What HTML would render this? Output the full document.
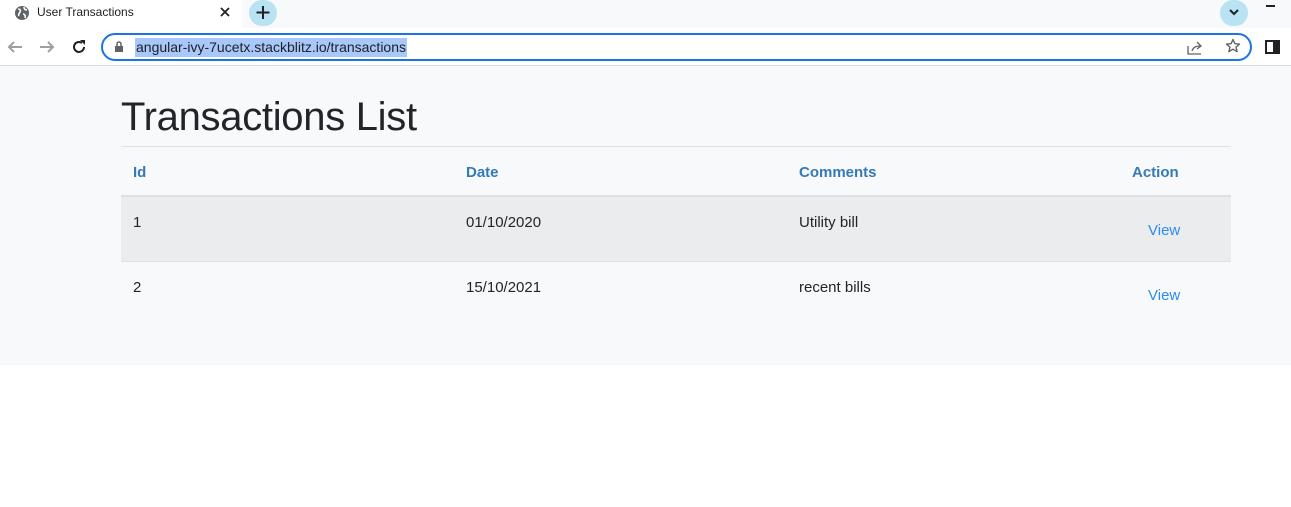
<!DOCTYPE html>
<html><head><style>
*{margin:0;padding:0;box-sizing:border-box}
body{width:1291px;height:507px;background:#fff;font-family:"Liberation Sans",sans-serif;position:relative;overflow:hidden}
.tabs{position:absolute;left:0;top:0;width:1291px;height:28px;background:#f8f9fa}
.tab{position:absolute;left:0;top:0;width:242px;height:28px;background:#fff}
.toolbar{position:absolute;left:0;top:28px;width:1291px;height:38px;background:#fff;border-bottom:1px solid #dadce0}
.omni{position:absolute;left:101px;top:33px;width:1151px;height:28px;border:2px solid #1a73e8;border-radius:14px;background:#fff}
.page{position:absolute;left:0;top:66px;width:1291px;height:299px;background:#f8f9fa}
h1{position:absolute;left:121px;top:95px;font-size:40px;font-weight:500;color:#212529;letter-spacing:-0.3px}
.t{position:absolute;left:121px;width:1110px;font-size:15px;color:#212529}
.th{color:#337ab7;font-weight:bold}
.a{position:absolute}
</style></head><body>
<div class="tabs"><div class="tab">
<svg class="a" style="left:14px;top:5px" width="16" height="16" viewBox="0 0 16 16"><circle cx="8" cy="8" r="7" fill="#5f6368"/><path d="M4 4c2 0 3 1 2 3s-2 2-1 4M10 2c0 2 1 3 3 3M9 9c1 0 3 1 2 4" stroke="#fff" stroke-width="1.6" fill="none"/></svg>
<div class="a" style="left:37px;top:5px;font-size:12px;color:#202124">User Transactions</div>
<svg class="a" style="left:220px;top:7px" width="10" height="10"><path d="M1 1l8 8M9 1l-8 8" stroke="#202124" stroke-width="1.8"/></svg>
</div>
<div class="a" style="left:249px;top:0;width:28px;height:26px;border-radius:14px;background:#b9e3f2"><svg width="28" height="26"><path d="M14 6v13M7.5 12.5h13" stroke="#202124" stroke-width="2"/></svg></div>
<div class="a" style="left:1220px;top:0;width:28px;height:26px;border-radius:14px;background:#b9e3f2"><svg width="28" height="26"><path d="M10 10l4 4 4-4" stroke="#202124" stroke-width="2" fill="none"/></svg></div>
<div class="a" style="left:1266px;top:5px;width:9px;height:2px;background:#202124"></div>
</div>
<div class="toolbar">
<svg class="a" style="left:6px;top:10px" width="18" height="18"><path d="M16 9H3M8 4L3 9l5 5" stroke="#9aa0a6" stroke-width="2" fill="none"/></svg>
<svg class="a" style="left:38px;top:10px" width="18" height="18"><path d="M2 9h13M10 4l5 5-5 5" stroke="#9aa0a6" stroke-width="2" fill="none"/></svg>
<svg class="a" style="left:70px;top:10px" width="18" height="18"><path d="M14 9a5 5 0 1 1-2-4" stroke="#202124" stroke-width="2" fill="none"/><path d="M10 2h5v5z" fill="#202124"/></svg>
<svg class="a" style="left:1265px;top:12px" width="16" height="14"><rect x="1" y="1" width="13" height="12" stroke="#202124" stroke-width="2" fill="none"/><rect x="8" y="1" width="6" height="12" fill="#202124"/></svg>
</div>
<div class="omni">
<svg class="a" style="left:11px;top:6px" width="10" height="12"><rect x="1" y="5" width="8" height="6" fill="#5f6368"/><path d="M3 5V3a2 2 0 0 1 4 0v2" stroke="#5f6368" stroke-width="1.5" fill="none"/></svg>
<div class="a" style="left:32px;top:3px;height:19px;padding:1px 1px;background:#a8c7fa;font-size:14px;color:#202124;line-height:17px">angular-ivy-7ucetx.stackblitz.io/transactions</div>
<svg class="a" style="left:1083px;top:5px" width="18" height="16"><path d="M2 6v8h13M6 11c1-4 4-5 8-5M11 2l4 4-4 3" stroke="#5f6368" stroke-width="1.3" fill="none"/></svg>
<svg class="a" style="left:1122px;top:3px" width="16" height="16" viewBox="0 0 16 16"><path d="M8 1.5l1.9 4.2 4.6.4-3.5 3 1.1 4.5L8 11.2l-4.1 2.4 1.1-4.5-3.5-3 4.6-.4z" stroke="#5f6368" stroke-width="1.4" fill="none" stroke-linejoin="round"/></svg>
</div>
<div class="page"></div>
<h1>Transactions List</h1>
<div class="t" style="top:146px;height:1px;background:#dee2e6"></div>
<div class="t th" style="top:164px"><span class="a" style="left:12px">Id</span><span class="a" style="left:345px">Date</span><span class="a" style="left:678px">Comments</span><span class="a" style="left:1011px">Action</span></div>
<div class="t" style="top:195px;height:2px;background:#dee2e6"></div>
<div class="t" style="top:197px;height:64px;background:#ebecee"></div>
<div class="t" style="top:261px;height:1px;background:#dee2e6"></div>
<div class="t" style="top:214px"><span class="a" style="left:12px">1</span><span class="a" style="left:345px">01/10/2020</span><span class="a" style="left:678px">Utility bill</span><span class="a" style="left:1027px;top:8px;color:#2a8cf0">View</span></div>
<div class="t" style="top:279px"><span class="a" style="left:12px">2</span><span class="a" style="left:345px">15/10/2021</span><span class="a" style="left:678px">recent bills</span><span class="a" style="left:1027px;top:8px;color:#2a8cf0">View</span></div>
</body></html>
